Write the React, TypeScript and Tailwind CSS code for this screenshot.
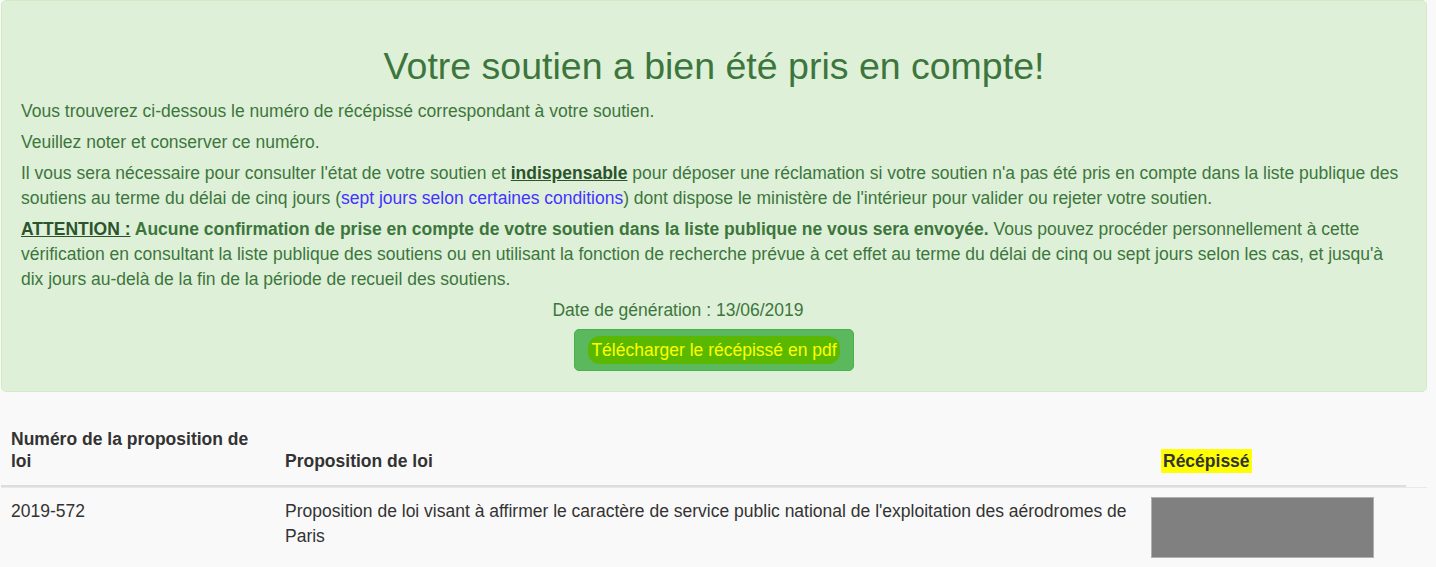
import React from "react";

export default function App() {
  return (
    <div className="min-h-[567px] bg-[#f9f9f9] text-[17.5px] leading-[25px] text-[#333333]" style={{ fontFamily: '"Liberation Sans", Arial, sans-serif' }}>
      <div className="ml-px w-[1426px] rounded-[5px] border border-[#d6e9c6] bg-[#dff0d8] px-[19px] pt-[19px] pb-[19.5px] text-[#3c763d]">
        <h2 className="mt-[26px] mb-[12px] text-center text-[37.5px] leading-[41px] font-normal">
          Votre soutien a bien été pris en compte!
        </h2>
        <p className="mb-[6px]">Vous trouverez ci-dessous le numéro de récépissé correspondant à votre soutien.</p>
        <p className="mb-[6px]">Veuillez noter et conserver ce numéro.</p>
        <p className="mb-[6px]">
          Il vous sera nécessaire pour consulter l'état de votre soutien et{" "}
          <b className="text-[#2b542c] underline">indispensable</b> pour déposer une réclamation si votre soutien n'a pas été pris en compte dans la liste publique des soutiens au terme du délai de cinq jours (
          <a className="text-[#4433ff]">sept jours selon certaines conditions</a>) dont dispose le ministère de l'intérieur pour valider ou rejeter votre soutien.
        </p>
        <p className="mb-[6px]">
          <b>
            <u className="text-[#2b542c]">ATTENTION :</u> Aucune confirmation de prise en compte de votre soutien dans la liste publique ne vous sera envoyée.
          </b>{" "}
          Vous pouvez procéder personnellement à cette vérification en consultant la liste publique des soutiens ou en utilisant la fonction de recherche prévue à cet effet au terme du délai de cinq ou sept jours selon les cas, et jusqu'à dix jours au-delà de la fin de la période de recueil des soutiens.
        </p>
        <div className="text-center pr-[72px]">Date de génération : 13/06/2019</div>
        <div className="mt-[6px] flex justify-center">
          <button className="h-[42px] rounded-[5px] border border-[#4cae4c] bg-[#5cb85c] px-[13px] text-[17.5px] leading-[25px] text-[#ffff00]">
            <span className="rounded-[12px] bg-[#5ab800] px-[3px] py-[4px]">Télécharger le récépissé en pdf</span>
          </button>
        </div>
      </div>

      <div className="mt-[25px] ml-px w-[1426px] border-b border-[#e8e8e8]">
        <table className="w-[1405px] table-fixed border-collapse">
          <colgroup>
            <col className="w-[274px]" />
            <col className="w-[876px]" />
            <col className="w-[255px]" />
          </colgroup>
          <thead>
            <tr className="border-b-[2.5px] border-[#dddddd]">
              <th className="px-[10px] pt-[11.5px] pb-[12.5px] text-left align-bottom font-bold leading-[22px]">Numéro de la proposition de loi</th>
              <th className="px-[10px] pt-[11.5px] pb-[12.5px] text-left align-bottom font-bold leading-[22px]">Proposition de loi</th>
              <th className="px-[10px] pt-[11.5px] pb-[12.5px] text-left align-bottom font-bold leading-[22px]">
                <span className="bg-[#ffff00] px-[2px] py-[2px]">Récépissé</span>
              </th>
            </tr>
          </thead>
        </table>
      </div>
      <table className="ml-px w-[1405px] table-fixed border-collapse">
        <colgroup>
          <col className="w-[274px]" />
          <col className="w-[876px]" />
          <col className="w-[255px]" />
        </colgroup>
        <tbody>
          <tr>
            <td className="px-[10px] pt-[11px] align-top">2019-572</td>
            <td className="px-[10px] pt-[11px] align-top">
              Proposition de loi visant à affirmer le caractère de service public national de l'exploitation des aérodromes de Paris
            </td>
            <td className="pt-[9px] align-top">
              <div className="h-[61px] w-[223px] border border-[#b0b0b0] bg-[#808080]" />
            </td>
          </tr>
        </tbody>
      </table>
    </div>
  );
}
